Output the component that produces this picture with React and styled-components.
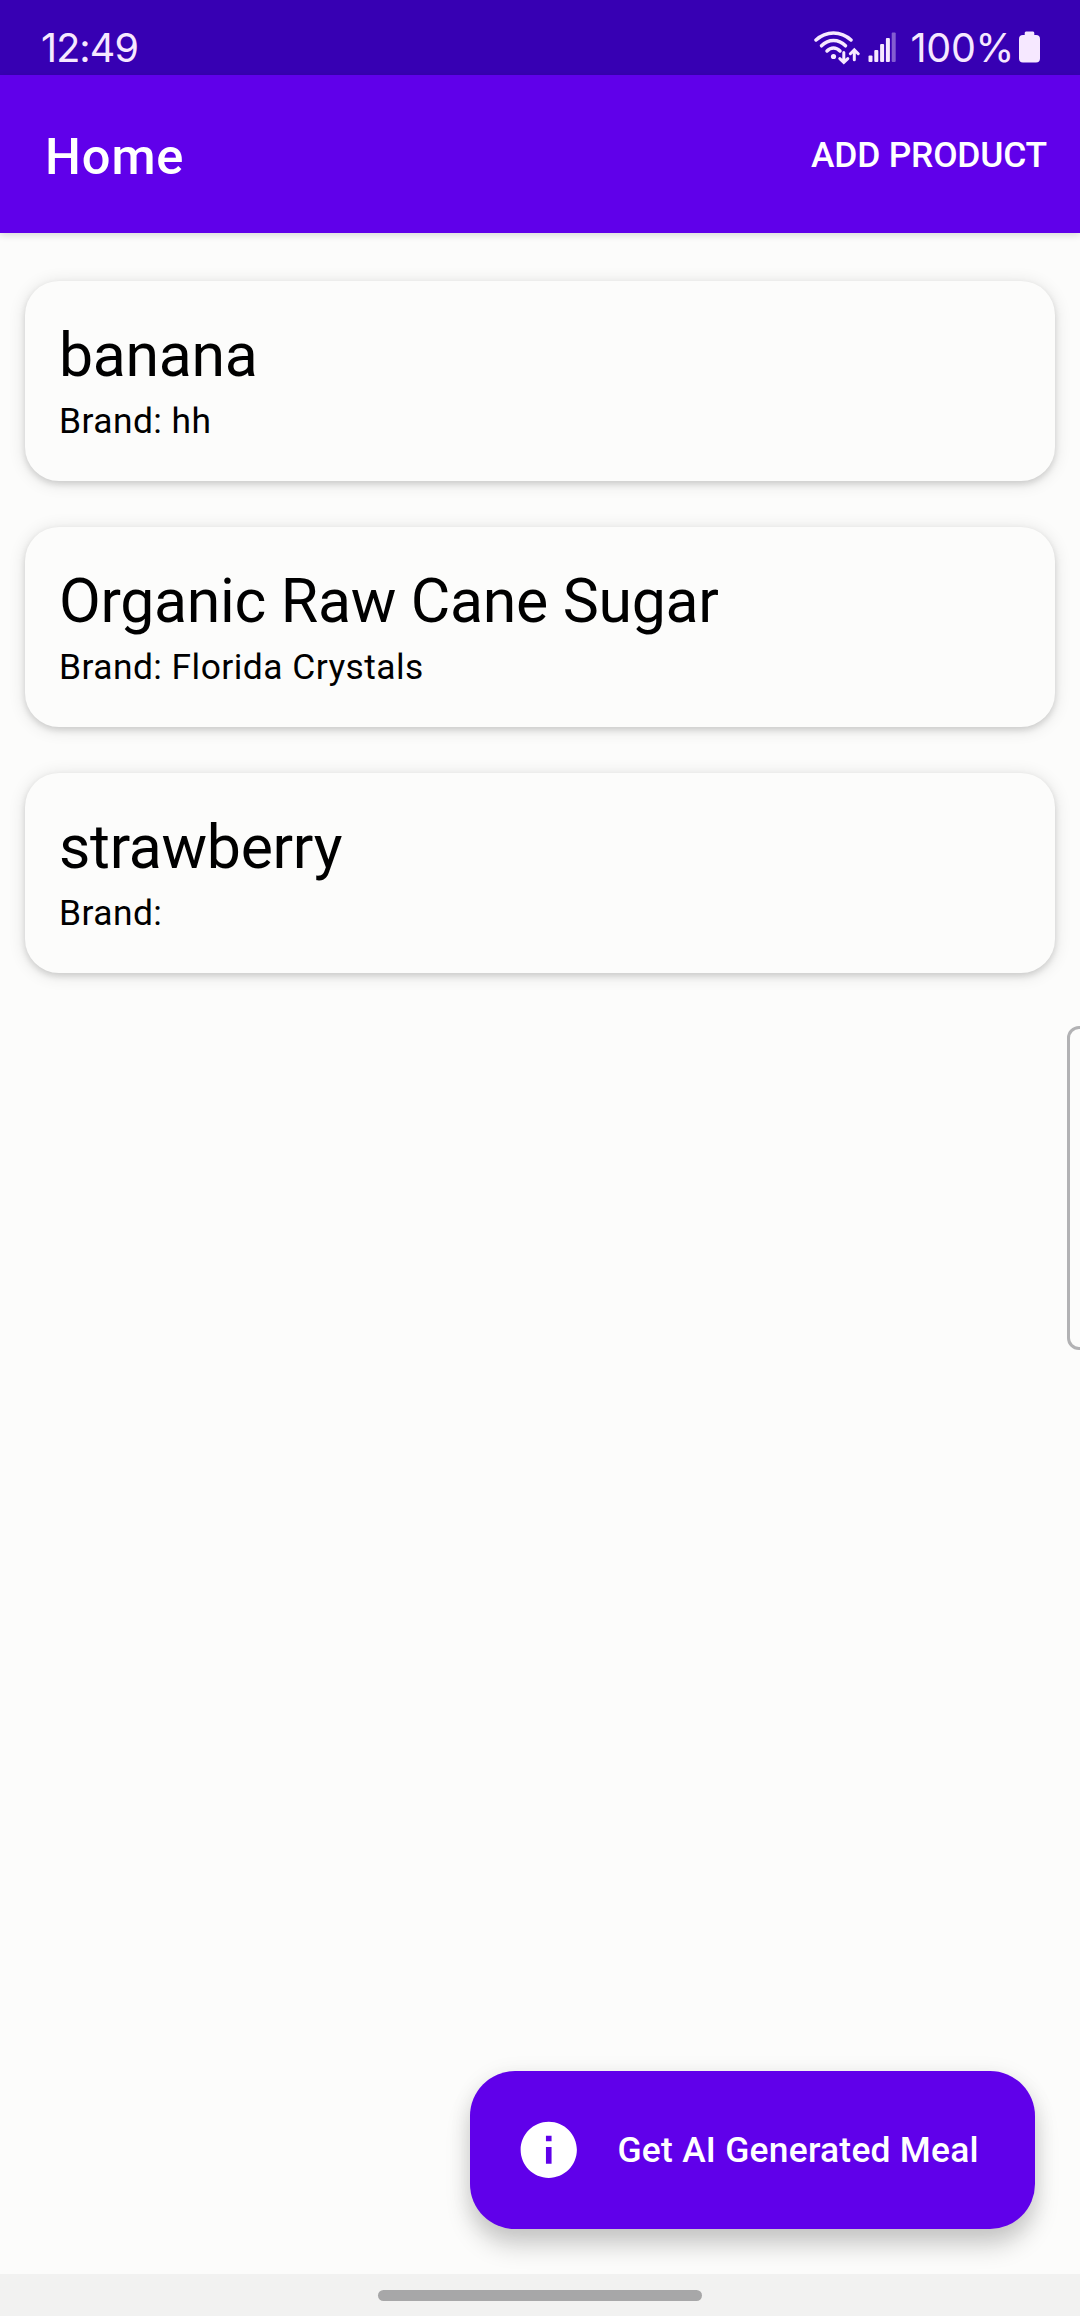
import React from "react";
import styled, { createGlobalStyle } from "styled-components";

const Global = createGlobalStyle`
  *, *::before, *::after { box-sizing: border-box; }
  body { margin: 0; background: #fcfcfb; font-family: Roboto, "Noto Sans", sans-serif; }
  button { border: 0; padding: 0; background: none; font: inherit; color: inherit; }
  h1, h2, p { margin: 0; font-weight: 400; }
`;

const Screen = styled.div`
  position: relative;
  display: flex;
  flex-direction: column;
  width: 1080px;
  height: 2316px;
  overflow: hidden;
  background: #fcfcfb;
`;

const StatusBar = styled.div`
  display: flex;
  flex: none;
  align-items: center;
  justify-content: space-between;
  height: 75px;
  padding: 21px 40px 0 41px;
  background: #3700b3;
  color: #f6e8ff;
  font-family: Inter, Roboto, sans-serif;
  font-size: 39.5px;
  line-height: 48px;
`;

const Clock = styled.span`
  letter-spacing: -0.9px;
`;

const StatusIcons = styled.div`
  display: flex;
  align-items: center;
  height: 48px;
`;

const Percent = styled.span`
  margin-left: 14px;
  margin-right: 5px;
  letter-spacing: -0.3px;
`;

const AppBar = styled.header`
  display: flex;
  flex: none;
  align-items: center;
  justify-content: space-between;
  height: 158px;
  padding: 0 33px 0 45px;
  background: #6000ea;
  color: #fff;
  box-shadow: 0 2px 7px rgba(0, 0, 0, 0.14);
`;

const Title = styled.h1`
  font-size: 50.6px;
  font-weight: 500;
  line-height: 60px;
  letter-spacing: 0.9px;
  padding-top: 5px;
`;

const BarAction = styled.button`
  padding-top: 2px;
  font-size: 35.4px;
  font-weight: 500;
  line-height: 42px;
  letter-spacing: -0.2px;
`;

const List = styled.main`
  display: flex;
  flex: 1;
  flex-direction: column;
  gap: 46px;
  padding: 48px 25px 0;
`;

const Card = styled.article`
  flex: none;
  height: 200px;
  padding: 34px;
  border-radius: 34px;
  background: #fcfcfb;
  box-shadow: 0 3px 6px rgba(0, 0, 0, 0.13), 0 2px 17px rgba(0, 0, 0, 0.12);
`;

const ProductName = styled.h2`
  color: #000;
  font-size: 60.75px;
  line-height: 81px;
  letter-spacing: -0.3px;
`;

const Brand = styled.p`
  color: #000;
  font-size: 35.4px;
  line-height: 51px;
  letter-spacing: 0.45px;
`;

const Fab = styled.button`
  position: absolute;
  right: 45px;
  bottom: 87px;
  display: flex;
  align-items: center;
  gap: 35px;
  width: 565px;
  height: 158px;
  padding-left: 45px;
  border-radius: 45px;
  background: #6000ea;
  color: #fff;
  font-size: 35.4px;
  font-weight: 500;
  line-height: 51px;
  letter-spacing: 0.25px;
  white-space: nowrap;
  box-shadow: 0 17px 24px rgba(0, 0, 0, 0.18), 0 3px 22px rgba(0, 0, 0, 0.08);
`;

const EdgeHandle = styled.div`
  position: absolute;
  top: 1026px;
  right: -14px;
  width: 27px;
  height: 324px;
  border: 3px solid #b2b2b4;
  border-radius: 12px;
  background: #fcfcfb;
`;

const NavBar = styled.footer`
  display: flex;
  flex: none;
  justify-content: center;
  height: 42px;
  padding-top: 16px;
  background: #f2f2f1;
`;

const HomeHandle = styled.div`
  width: 324px;
  height: 11px;
  border-radius: 6px;
  background: #a7a7a8;
`;

const Glyph = styled.svg`
  display: block;
  flex: none;
`;

function WifiIcon() {
  return (
    <Glyph width="46" height="36" viewBox="0 0 46 36" fill="none" stroke="currentColor" strokeWidth="3.5" strokeLinecap="round">
      <path d="M2 10C12 .5 27 .5 37 10" />
      <path d="M7.5 15.8C14.5 8.8 24.5 8.8 31.5 15.8" />
      <path d="M13 21C17 17 22 17 26 21" />
      <circle cx="19.5" cy="26.5" r="2.6" fill="currentColor" stroke="none" />
      <path d="M29.8 22.5V32M25.8 28.6L29.8 32.4L33.8 28.6" strokeWidth="3" />
      <path d="M40.3 29.8V20.5M36.4 23.7L40.3 19.8L44.2 23.7" strokeWidth="3" />
    </Glyph>
  );
}

const SIGNAL_HEIGHTS = [6.5, 12, 18, 24, 29.5];

function SignalIcon() {
  return (
    <Glyph width="37" height="36" viewBox="0 0 37 36" fill="currentColor">
      {SIGNAL_HEIGHTS.map((h, i) => (
        <rect key={h} x={8.5 + i * 5.8} y={32 - h} width="4" height={h} rx="1" opacity={i === 4 ? 0.4 : 1} />
      ))}
    </Glyph>
  );
}

function BatteryIcon() {
  return (
    <Glyph width="21" height="36" viewBox="0 0 21 36" fill="currentColor">
      <path d="M7 1.5H14Q15.3 1.5 15.3 3V5H17Q21 5 21 9V28.5Q21 32.5 17 32.5H4Q0 32.5 0 28.5V9Q0 5 4 5H5.7V3Q5.7 1.5 7 1.5Z" />
    </Glyph>
  );
}

function InfoIcon() {
  return (
    <Glyph width="67.5" height="67.5" viewBox="0 0 24 24" fill="currentColor">
      <path d="M12 2C6.48 2 2 6.48 2 12s4.48 10 10 10 10-4.48 10-10S17.52 2 12 2zm1 15h-2v-6h2v6zm0-8h-2V7h2v2z" />
    </Glyph>
  );
}

const PRODUCTS = [
  { name: "banana", brand: "hh" },
  { name: "Organic Raw Cane Sugar", brand: "Florida Crystals" },
  { name: "strawberry", brand: "" },
];

export default function App() {
  return (
    <>
      <Global />
      <Screen>
        <StatusBar>
          <Clock>12:49</Clock>
          <StatusIcons>
            <WifiIcon />
            <SignalIcon />
            <Percent>100%</Percent>
            <BatteryIcon />
          </StatusIcons>
        </StatusBar>
        <AppBar>
          <Title>Home</Title>
          <BarAction>ADD PRODUCT</BarAction>
        </AppBar>
        <List>
          {PRODUCTS.map((p) => (
            <Card key={p.name}>
              <ProductName>{p.name}</ProductName>
              <Brand>Brand: {p.brand}</Brand>
            </Card>
          ))}
        </List>
        <NavBar>
          <HomeHandle />
        </NavBar>
        <EdgeHandle />
        <Fab>
          <InfoIcon />
          Get AI Generated Meal
        </Fab>
      </Screen>
    </>
  );
}
